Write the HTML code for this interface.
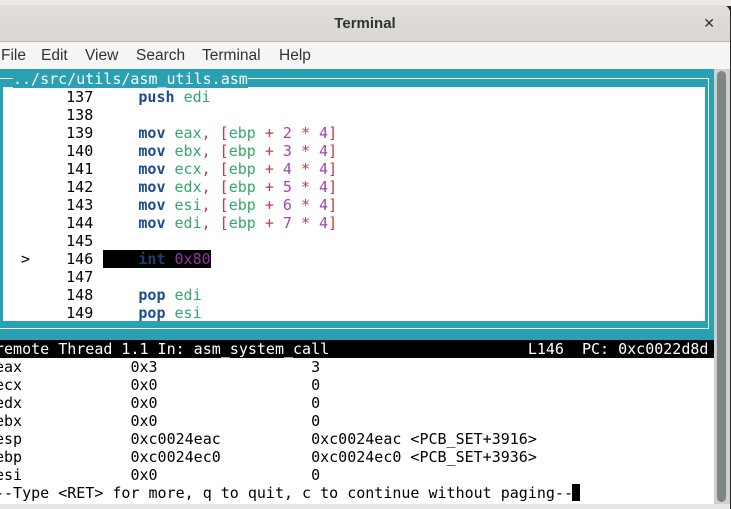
<!DOCTYPE html>
<html><head><meta charset="utf-8"><style>
*{margin:0;padding:0;box-sizing:border-box}
body{width:731px;height:509px;overflow:hidden;background:#2b2b2b;position:relative;font-family:"Liberation Sans",sans-serif}
.top{position:absolute;left:0;top:0;width:731px;height:6px;background:#ecebe9}
.win{position:absolute;left:0;top:5px;width:730px;height:504px;background:#fff;border-top-right-radius:8px;overflow:hidden}
.title{position:absolute;left:0;top:0;width:730px;height:37px;background:linear-gradient(#e1deda,#dad6d2);border-bottom:1px solid #bdb8b3;text-align:center;font-weight:bold;font-size:15px;color:#2e3436;line-height:37px}
.x{position:absolute;right:15px;top:0;font-size:14px;font-weight:normal;color:#2e3436}
.menu{position:absolute;left:0;top:37px;width:730px;height:27px;background:#f6f5f4;font-size:15.5px;color:#2e3436;line-height:28px}
.menu span{position:absolute;top:0}
.t{position:absolute;font-family:"DejaVu Sans Mono","Liberation Mono",monospace;font-size:15px;line-height:18px;white-space:pre;color:#000}
.kw{color:#1c4e8f;font-weight:bold}.rg{color:#33a86b}.rd{color:#c83a3f}.nu{color:#a244b3}
</style></head><body>
<div class="top"></div>
<div class="win">
<div class="title">Terminal<span class="x">✕</span></div>
<div class="menu"><span style="left:1px">File</span><span style="left:41px">Edit</span><span style="left:85px">View</span><span style="left:136px">Search</span><span style="left:202px">Terminal</span><span style="left:279px">Help</span></div>
</div>
<div style="position:absolute;left:0;top:69px;width:714px;height:271px;background:#2aa1b3"></div>
<div style="position:absolute;left:0;top:78px;width:13px;height:1px;background:#fff"></div>
<div style="position:absolute;left:247px;top:78px;width:462px;height:1px;background:#fff"></div>
<div style="position:absolute;left:708px;top:78px;width:1px;height:251px;background:#fff"></div>
<div style="position:absolute;left:0;top:328px;width:709px;height:1px;background:#fff"></div>
<div style="position:absolute;left:3px;top:87px;width:702px;height:234px;background:#fff"></div>
<div class="t" style="left:13px;top:70px;color:#fff;background:#2aa1b3">../src/utils/asm_utils.asm</div>
<div style="position:absolute;left:103px;top:250px;width:108px;height:18px;background:#000"></div>
<div class="t" style="left:21px;top:88px">     137     <span class="kw">push</span> <span class="rg">edi</span>
     138
     139     <span class="kw">mov</span> <span class="rg">eax</span><span class="rd">, [</span><span class="rg">ebp</span> <span class="rd">+</span> <span class="nu">2</span> <span class="rd">*</span> <span class="nu">4</span><span class="rd">]</span>
     140     <span class="kw">mov</span> <span class="rg">ebx</span><span class="rd">, [</span><span class="rg">ebp</span> <span class="rd">+</span> <span class="nu">3</span> <span class="rd">*</span> <span class="nu">4</span><span class="rd">]</span>
     141     <span class="kw">mov</span> <span class="rg">ecx</span><span class="rd">, [</span><span class="rg">ebp</span> <span class="rd">+</span> <span class="nu">4</span> <span class="rd">*</span> <span class="nu">4</span><span class="rd">]</span>
     142     <span class="kw">mov</span> <span class="rg">edx</span><span class="rd">, [</span><span class="rg">ebp</span> <span class="rd">+</span> <span class="nu">5</span> <span class="rd">*</span> <span class="nu">4</span><span class="rd">]</span>
     143     <span class="kw">mov</span> <span class="rg">esi</span><span class="rd">, [</span><span class="rg">ebp</span> <span class="rd">+</span> <span class="nu">6</span> <span class="rd">*</span> <span class="nu">4</span><span class="rd">]</span>
     144     <span class="kw">mov</span> <span class="rg">edi</span><span class="rd">, [</span><span class="rg">ebp</span> <span class="rd">+</span> <span class="nu">7</span> <span class="rd">*</span> <span class="nu">4</span><span class="rd">]</span>
     145
&gt;    146     <span class="kw" style="color:#1a3f75">int</span> <span class="nu" style="color:#8e3aa0">0x80</span>
     147
     148     <span class="kw">pop</span> <span class="rg">edi</span>
     149     <span class="kw">pop</span> <span class="rg">esi</span></div>
<div style="position:absolute;left:0;top:340px;width:714px;height:18px;background:#000"></div>
<div class="t" style="left:-5px;top:340px;color:#fff">remote Thread 1.1 In: asm_system_call                      L146  PC: 0xc0022d8d</div>
<div style="position:absolute;left:0;top:358px;width:714px;height:146px;background:#fff"></div>
<div class="t" style="left:-5px;top:358px">eax            0x3                 3
ecx            0x0                 0
edx            0x0                 0
ebx            0x0                 0
esp            0xc0024eac          0xc0024eac &lt;PCB_SET+3916&gt;
ebp            0xc0024ec0          0xc0024ec0 &lt;PCB_SET+3936&gt;
esi            0x0                 0
--Type &lt;RET&gt; for more, q to quit, c to continue without paging--</div>
<div style="position:absolute;left:572px;top:484px;width:8px;height:17px;background:#000"></div>
<div style="position:absolute;left:714px;top:69px;width:16px;height:435px;background:#cfcfcf"></div>
<div style="position:absolute;left:717px;top:71px;width:9px;height:431px;background:#7f8487;border-radius:5px"></div>
<div style="position:absolute;left:0;top:504px;width:730px;height:5px;background:#e8e7e5"></div>
</body></html>
